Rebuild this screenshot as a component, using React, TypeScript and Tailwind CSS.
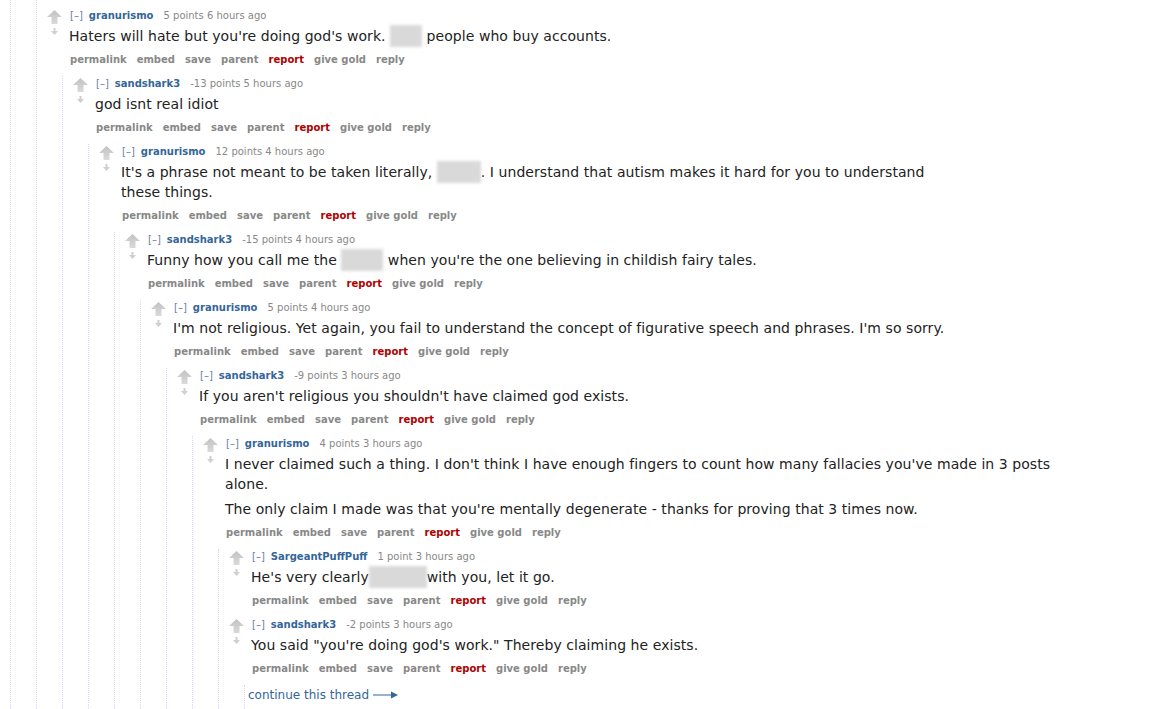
import React from "react";

type CommentData = {
  user: string;
  score: string;
  time: string;
  paras: React.ReactNode[];
  replies?: CommentData[];
  more?: boolean;
};

function Redacted({ w }: { w: number }) {
  return (
    <span
      className="inline-block align-top h-[22px] -my-[1px] bg-[#d9d9d9] blur-[1.5px]"
      style={{ width: w }}
    />
  );
}

const thread: CommentData = {
  user: "granurismo",
  score: "5 points",
  time: "6 hours ago",
  paras: [
    <>
      Haters will hate but you're doing god's work. <Redacted w={32} /> people who buy accounts.
    </>,
  ],
  replies: [
    {
      user: "sandshark3",
      score: "-13 points",
      time: "5 hours ago",
      paras: ["god isnt real idiot"],
      replies: [
        {
          user: "granurismo",
          score: "12 points",
          time: "4 hours ago",
          paras: [
            <>
              It's a phrase not meant to be taken literally, <Redacted w={44} />. I understand that
              autism makes it hard for you to understand these things.
            </>,
          ],
          replies: [
            {
              user: "sandshark3",
              score: "-15 points",
              time: "4 hours ago",
              paras: [
                <>
                  Funny how you call me the <Redacted w={42} /> when you're the one believing in
                  childish fairy tales.
                </>,
              ],
              replies: [
                {
                  user: "granurismo",
                  score: "5 points",
                  time: "4 hours ago",
                  paras: [
                    "I'm not religious. Yet again, you fail to understand the concept of figurative speech and phrases. I'm so sorry.",
                  ],
                  replies: [
                    {
                      user: "sandshark3",
                      score: "-9 points",
                      time: "3 hours ago",
                      paras: ["If you aren't religious you shouldn't have claimed god exists."],
                      replies: [
                        {
                          user: "granurismo",
                          score: "4 points",
                          time: "3 hours ago",
                          paras: [
                            "I never claimed such a thing. I don't think I have enough fingers to count how many fallacies you've made in 3 posts alone.",
                            "The only claim I made was that you're mentally degenerate - thanks for proving that 3 times now.",
                          ],
                          replies: [
                            {
                              user: "SargeantPuffPuff",
                              score: "1 point",
                              time: "3 hours ago",
                              paras: [
                                <>
                                  He's very clearly<Redacted w={58} />with you, let it go.
                                </>,
                              ],
                            },
                            {
                              user: "sandshark3",
                              score: "-2 points",
                              time: "3 hours ago",
                              paras: ['You said "you\'re doing god\'s work." Thereby claiming he exists.'],
                              more: true,
                            },
                          ],
                        },
                      ],
                    },
                  ],
                },
              ],
            },
          ],
        },
      ],
    },
  ],
};

function Arrows() {
  return (
    <div className="w-[15px] shrink-0 mr-[7px] flex flex-col items-center">
      <svg width="15" height="14" viewBox="0 0 15 14" className="mt-[2px]">
        <defs>
          <linearGradient id="up" x1="0" y1="0" x2="0" y2="1">
            <stop offset="0" stopColor="#c2c2c2" />
            <stop offset="1" stopColor="#dadada" />
          </linearGradient>
        </defs>
        <polygon points="7.5,0 15,7 10.5,7 10.5,14 4.5,14 4.5,7 0,7" fill="url(#up)" />
      </svg>
      <svg width="7" height="7" viewBox="0 0 7 7" className="mt-[4px]">
        <polygon points="2.5,0 4.5,0 4.5,3 7,3 3.5,7 0,3 2.5,3" fill="#cfcfcf" />
      </svg>
    </div>
  );
}

const buttons = ["permalink", "embed", "save", "parent", "report", "give gold", "reply"];

function Comment({ c }: { c: CommentData }) {
  return (
    <div className="ml-[10px]">
      <div className="flex">
        <Arrows />
        <div className="pb-[9px]">
          <div className="h-[16px] leading-[16px] pl-[1px] text-[10px] text-[#888] whitespace-nowrap">
            <span className="text-[#6a7fa3]">[–]</span>
            <span className="font-bold text-[#336699] ml-[6px] mr-[10px]">{c.user}</span>
            <span>{c.score}</span> <span>{c.time}</span>
          </div>
          <div className="flow-root pt-[2px] max-w-[840px] text-[14px] leading-[20px] tracking-[0.06px] text-[#222]">
            {c.paras.map((p, i) => (
              <p key={i} className="mb-[5px]">
                {p}
              </p>
            ))}
          </div>
          <ul className="mt-[2px] pl-[1px] flex gap-[10px] h-[14px] leading-[14px] text-[10px] font-bold text-[#888]">
            {buttons.map((b) => (
              <li key={b} className={b === "report" ? "text-[#b00000]" : ""}>
                {b}
              </li>
            ))}
          </ul>
        </div>
      </div>
      {c.replies && (
        <div className="ml-[15px] border-l border-dotted border-[#d6d6f2]">
          {c.replies.map((r, i) => (
            <Comment key={i} c={r} />
          ))}
        </div>
      )}
      {c.more && (
        <div className="ml-[15px] border-l border-dotted border-[#d6d6f2] pl-[3px] pt-[2px] pb-[40px] text-[12px] leading-[16px] text-[#336699]">
          <span className="inline-flex items-center gap-[4px]">
            continue this thread
            <svg width="25" height="8" viewBox="0 0 25 8">
              <line x1="0" y1="4" x2="19" y2="4" stroke="#336699" strokeWidth="1" />
              <polygon points="18,0.5 25,4 18,7.5" fill="#336699" />
            </svg>
          </span>
        </div>
      )}
    </div>
  );
}

export default function App() {
  return (
    <div
      className="h-[709px] w-[1154px] overflow-hidden bg-white pl-[10px]"
      style={{ fontFamily: '"DejaVu Sans", Verdana, sans-serif' }}
    >
      <div className="border-l border-dotted border-[#d6d6f2] min-h-full">
        <div className="ml-[25px] border-l border-dotted border-[#d6d6f2] pt-[8px] min-h-[709px]">
          <Comment c={thread} />
        </div>
      </div>
    </div>
  );
}
